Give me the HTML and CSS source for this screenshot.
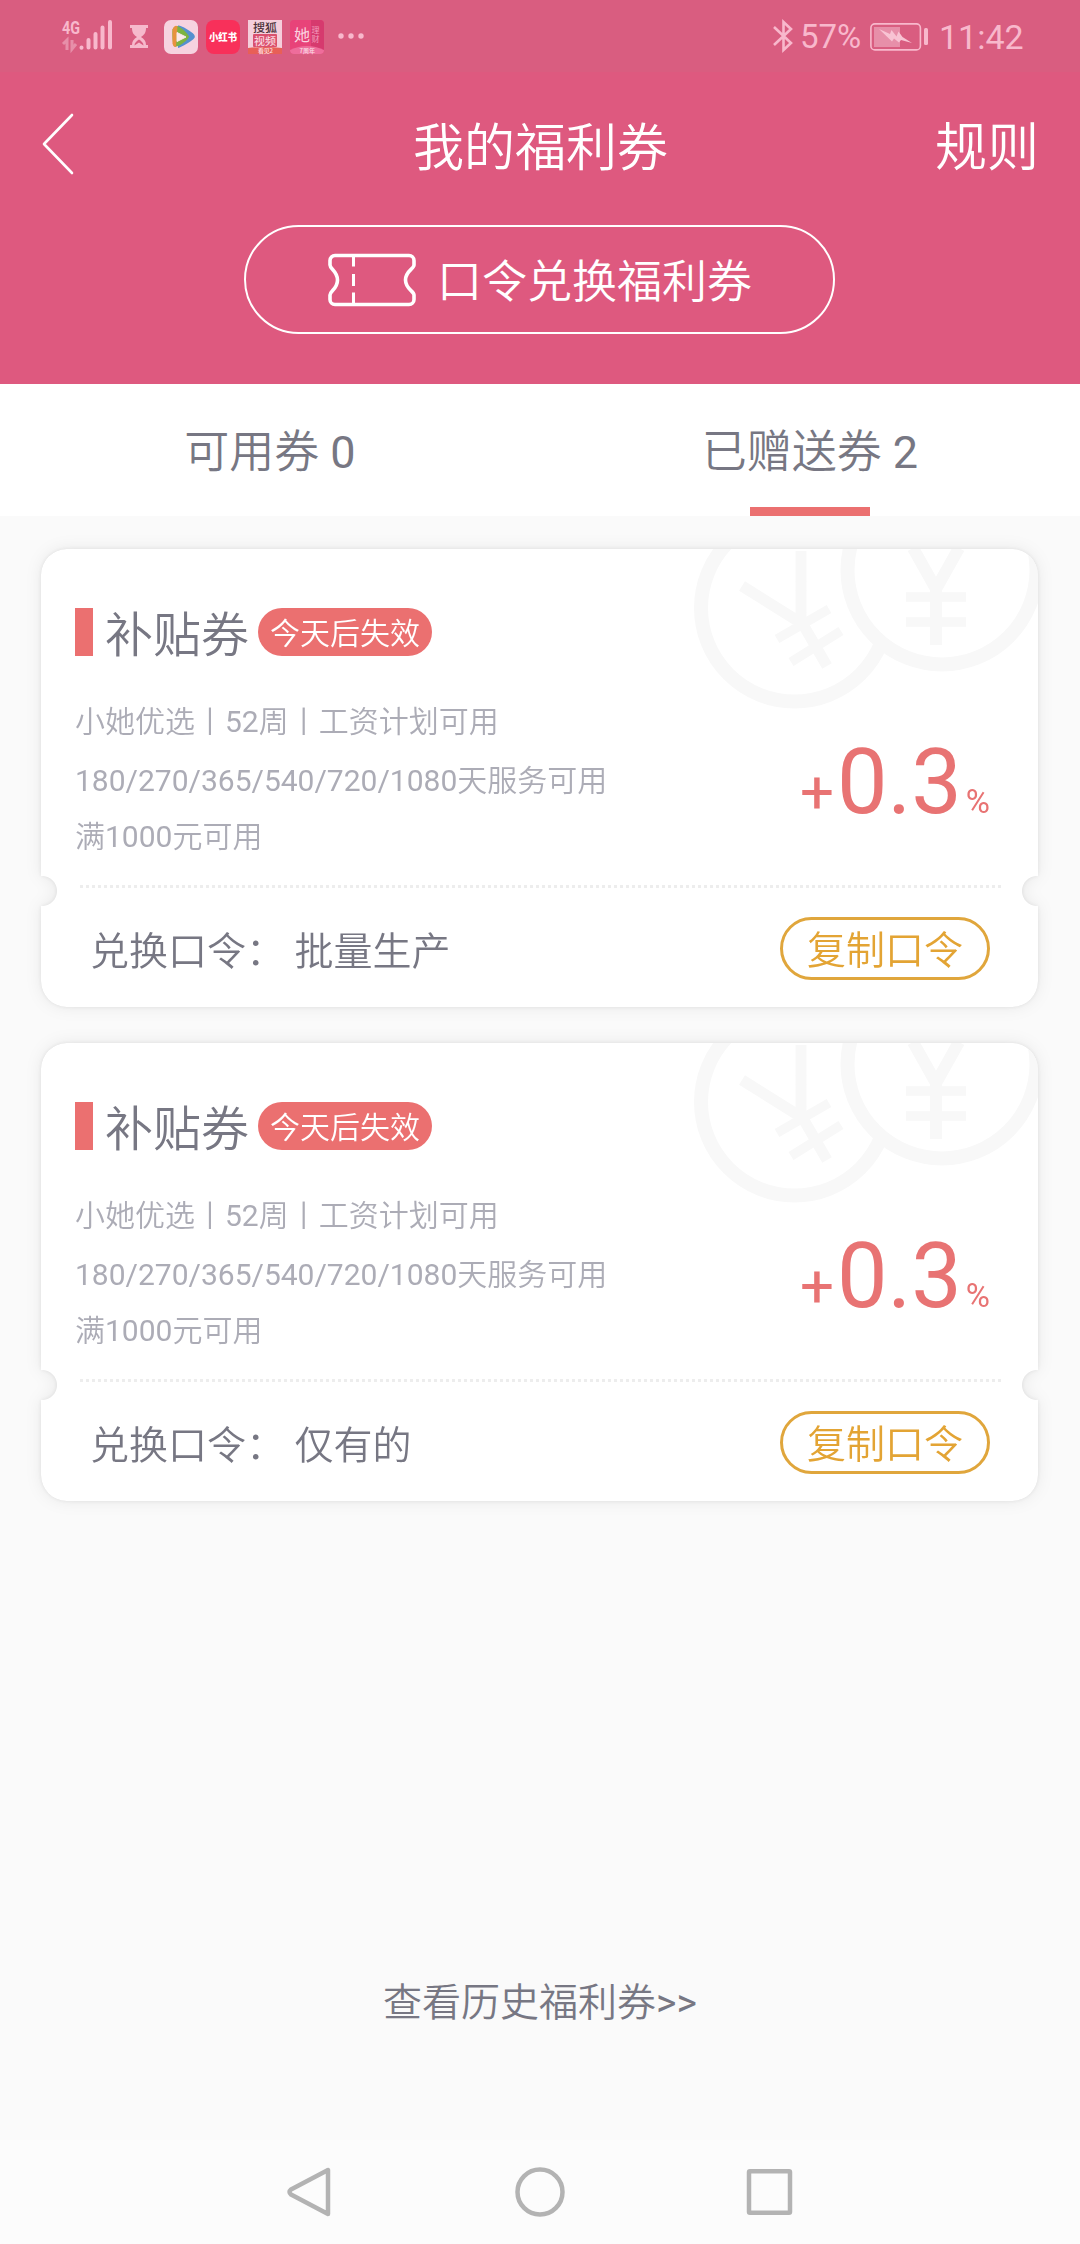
FILE: index.html
```html
<!DOCTYPE html>
<html lang="zh-CN">
<head>
<meta charset="utf-8">
<title>我的福利券</title>
<link rel="stylesheet" href="styles.css">
</head>
<body>
<div class="screen">
  <header class="header">
    <div class="status">
      <svg class="signal" width="52" height="36" viewBox="0 0 52 36">
        <text class="net" x="0" y="16" textLength="18" lengthAdjust="spacingAndGlyphs">4G</text>
        <path class="arrows" d="M1 26l4-4v10M10 22v9l4-5"/>
        <path class="bars" d="M19.500 29.500v.2M26.500 22v7.500M33.500 16v13.500M40.500 9.500v20M48 4v25.500"/>
      </svg>
      <svg class="hourglass" width="18" height="24" viewBox="0 0 18 24">
        <path d="M0 0h18v3h-2c0 5-2 7-5 9 3 2 5 4 5 8h2v3H0v-3h2c0-4 2-6 5-8C4 10 2 8 2 3H0z" fill="#f6b9cc"/>
        <path d="M4.500 20.500c0-3 2-4 4.500-6 2.500 2 4.500 3 4.500 6L9 17.500z" fill="#d95d80"/>
      </svg>
      <svg class="app" width="34" height="34" viewBox="0 0 34 34">
        <rect width="34" height="34" rx="7" fill="#f6d3e0"/>
        <path d="M14 5.500c2-.8 14 6 16 9 1.500 2 1 3.500-1 5-3 2.500-11 7.500-15 8.500z" fill="#5590cf"/>
        <path d="M8.500 9.500C10 6 13 5 15.500 7c4 2.500 8 6 9.500 9.500 0 3-11 11.500-14.500 10-2-1-2.500-13-2-17z" fill="#7cb342"/>
        <path d="M8.500 9.500C10 6 12 5 13.500 6.500L12 27c-2 0-3-1-3.500-3.500z" fill="#e8923e"/>
        <path d="M13 12.500l9 4.500-9 4.500z" fill="#fbe9ea" stroke="#fbe9ea" stroke-width="1" stroke-linejoin="round"/>
      </svg>
      <svg class="app" width="34" height="34" viewBox="0 0 34 34">
        <rect width="34" height="34" rx="8" fill="#f8305a"/>
        <text class="app-book" x="3" y="20.500" textLength="28" lengthAdjust="spacingAndGlyphs">小红书</text>
      </svg>
      <svg class="app" width="34" height="34" viewBox="0 0 34 34">
        <rect width="34" height="34" fill="#f5cfdc"/>
        <text class="app-sohu" x="5" y="11.500" textLength="24" lengthAdjust="spacingAndGlyphs">搜狐</text>
        <rect x="5" y="14" width="24" height="13" rx="1" fill="#d9506e"/>
        <text class="app-video" x="6" y="24.500" textLength="22" lengthAdjust="spacingAndGlyphs">视频</text>
        <path d="M0 28q17-2 34 0v6H0z" fill="#e85f57"/>
        <text class="app-tiny" x="10" y="33" textLength="15">看见2</text>
      </svg>
      <svg class="app" width="34" height="34" viewBox="0 0 34 34">
        <rect width="34" height="34" rx="4" fill="#e84379"/>
        <path d="M21 0h9q4 0 4 4v26H21z" fill="#d63a6e"/>
        <text class="app-she" x="4" y="20.500">她</text>
        <text class="app-side" x="21.500" y="13">理</text>
        <text class="app-side" x="21.500" y="21.500">财</text>
        <path d="M0 30q17-8 34 0 0 4-4 4H4q-4 0-4-4z" fill="#ee6d9b"/>
        <text class="app-tiny" x="9.500" y="32.500">7周年</text>
      </svg>
      <svg class="more" width="26" height="6" viewBox="0 0 26 6" fill="#f8b8cc">
        <circle cx="3" cy="3" r="2.700"/><circle cx="13" cy="3" r="2.700"/><circle cx="23" cy="3" r="2.700"/>
      </svg>
      <svg class="bluetooth" width="20" height="32" viewBox="0 0 20 32" fill="none" stroke="#f8b8cc" stroke-width="2.600">
        <path d="M1 7l17 16-7.500 7V2l7.500 7L1 25"/>
      </svg>
      <span class="percent">57%</span>
      <svg class="battery" width="58" height="28" viewBox="0 0 58 28">
        <rect x=".9" y=".9" width="49.500" height="26" rx="4" fill="none" stroke="#f8b8cc" stroke-width="1.600"/>
        <rect x="4" y="4" width="26" height="20" fill="#e78fa9"/>
        <path d="M9 6l11 5 1.500-4 5 6.500 2-5 4 5.500L42 20l-11-3-2 2.500-5-4-2 3z" fill="#f8c3d3"/>
        <rect x="54" y="5" width="4" height="17" rx="1.500" fill="#f8b8cc"/>
      </svg>
      <span class="clock">11:42</span>
    </div>
    <div class="titlebar">
      <svg class="back" width="32" height="62" viewBox="0 0 32 62" fill="none" stroke="#fff" stroke-width="2.600" stroke-linecap="round" stroke-linejoin="round">
        <path d="M30 2L2 31l28 29"/>
      </svg>
      <h1 class="title">我的福利券</h1>
      <span class="rules">规则</span>
    </div>
    <div class="redeem">
      <svg width="88" height="54" viewBox="0 0 88 54" fill="none" stroke="#fff" stroke-width="3.600">
        <path d="M7 2.500H81a5 5 0 0 1 5 5V12c0 4-8.500 6-8.500 15S86 38 86 42v4.500a5 5 0 0 1-5 5H7a5 5 0 0 1-5-5V42c0-4 7.500-6 7.500-15S2 16 2 12V7.500a5 5 0 0 1 5-5z"/>
        <path d="M25.500 4v9.500M25.500 21v12M25.500 39.500V50" stroke-width="3"/>
      </svg>
      <span>口令兑换福利券</span>
    </div>
  </header>

  <nav class="tabs">
    <div class="tab">可用券 <span class="num">0</span></div>
    <div class="tab active">已赠送券 <span class="num">2</span></div>
  </nav>

  <main class="list">
    <section class="card">
      <div class="sheet">
        <svg class="coins" width="350" height="165" viewBox="0 0 350 165" fill="none" stroke="#f8f8f8" stroke-width="14">
          <circle cx="103.500" cy="59" r="93.500"/>
          <g stroke-width="11"><path d="M110 2V74L51 37M110 72l26 45"/><path d="M86 90l52-30M100 113l50-31" stroke-width="9.500"/></g>
          <circle cx="251" cy="21" r="94.500" fill="#fff"/>
          <g stroke-width="12"><path d="M245 96V38M222-1l23 41L268-1"/><path d="M215 48h60M215 73h60" stroke-width="9.500"/></g>
        </svg>
        <div class="head"><i class="mark"></i><h2 class="name">补贴券</h2><span class="badge">今天后失效</span></div>
        <div class="body">
          <div class="terms">
            <p>小她优选丨<span class="num">52</span>周丨工资计划可用</p>
            <p><span class="num">180/270/365/540/720/1080</span>天服务可用</p>
            <p>满<span class="num">1000</span>元可用</p>
          </div>
          <div class="rate"><span class="plus">+</span><span class="value">0.3</span><span class="unit">%</span></div>
        </div>
        <div class="rule"></div>
        <div class="foot"><span class="code">兑换口令： 批量生产</span><span class="copy">复制口令</span></div>
      </div>
    </section>

    <section class="card">
      <div class="sheet">
        <svg class="coins" width="350" height="165" viewBox="0 0 350 165" fill="none" stroke="#f8f8f8" stroke-width="14">
          <circle cx="103.500" cy="59" r="93.500"/>
          <g stroke-width="11"><path d="M110 2V74L51 37M110 72l26 45"/><path d="M86 90l52-30M100 113l50-31" stroke-width="9.500"/></g>
          <circle cx="251" cy="21" r="94.500" fill="#fff"/>
          <g stroke-width="12"><path d="M245 96V38M222-1l23 41L268-1"/><path d="M215 48h60M215 73h60" stroke-width="9.500"/></g>
        </svg>
        <div class="head"><i class="mark"></i><h2 class="name">补贴券</h2><span class="badge">今天后失效</span></div>
        <div class="body">
          <div class="terms">
            <p>小她优选丨<span class="num">52</span>周丨工资计划可用</p>
            <p><span class="num">180/270/365/540/720/1080</span>天服务可用</p>
            <p>满<span class="num">1000</span>元可用</p>
          </div>
          <div class="rate"><span class="plus">+</span><span class="value">0.3</span><span class="unit">%</span></div>
        </div>
        <div class="rule"></div>
        <div class="foot"><span class="code">兑换口令： 仅有的</span><span class="copy">复制口令</span></div>
      </div>
    </section>
  </main>

  <div class="history">查看历史福利券<span class="num">&gt;&gt;</span></div>

  <footer class="sysnav">
    <svg width="506" height="50" viewBox="0 0 506 50" fill="none" stroke="#b3b3b3" stroke-width="4.500" stroke-linejoin="round">
      <path d="M41 3v44L4 27.500q-3-2.500 0-5z"/>
      <circle cx="253" cy="25" r="22.500"/>
      <rect x="462" y="4.300" width="41" height="41.500" rx="1"/>
    </svg>
  </footer>
</div>
</body>
</html>
```
FILE: styles.css
```css
* { box-sizing: border-box; margin: 0; padding: 0; }
body {
  background: #fafafa;
  color: #777783;
  font-family: Roboto, "Noto Sans CJK SC", sans-serif;
  font-weight: 350;
}
.num { font-weight: 400; }
.screen { width: 1080px; height: 2244px; display: flex; flex-direction: column; overflow: hidden; }

.header { height: 384px; background: #de597f; color: #fff; display: flex; flex-direction: column; align-items: center; }
.status { width: 1080px; height: 72px; padding-left: 62px; background: #d95d80; color: #f8b8cc; display: flex; align-items: center; font-weight: 400; font-size: 34px; }
.status svg { flex: none; overflow: visible; }
.hourglass { margin: 2px 16px 0 16px; }
.app { margin: 2px 8px 0 0; }
.more { margin: 0 409px 0 6px; }
.percent { width: 70px; margin-left: 7px; font-size: 33px; line-height: 40px; padding-top: 2px; }
.battery { margin-top: 1px; }
.clock { margin-left: 11px; line-height: 40px; padding-top: 2px; }
.net { font: 700 19px Roboto, sans-serif; fill: #f8b8cc; }
.arrows { fill: none; stroke: #e78fa9; stroke-width: 3; }
.bars { fill: none; stroke: #f8b8cc; stroke-width: 4; stroke-linecap: round; }
.app text { font-family: "Noto Sans CJK SC", sans-serif; }
.app-book { font-size: 10px; font-weight: 900; fill: #fff; }
.app-sohu { font-size: 11px; font-weight: 500; fill: #4a3139; }
.app-video { font-size: 10px; font-weight: 500; fill: #f9d5df; }
.app-tiny { font-size: 6px; font-weight: 500; fill: #fbe0e8; }
.app-she { font-size: 16px; font-weight: 400; fill: #fbd3e0; }
.app-side { font-size: 8px; font-weight: 400; fill: #f39abb; }

.titlebar { width: 100%; height: 152px; padding: 0 41px 0 42px; display: grid; grid-template-columns: 1fr auto 1fr; align-items: center; line-height: 76px; }
.titlebar .back { margin-bottom: 8px; }
.title { font-size: 51px; font-weight: 350; padding-top: 2px; }
.rules { justify-self: end; font-size: 52px; padding-top: 2px; }
.redeem { width: 591px; height: 109px; margin: 1px 1px 0 0; border: 2px solid #fff; border-radius: 55px; display: flex; align-items: center; padding-left: 82px; gap: 21px; font-size: 45px; line-height: 66px; }
.redeem span { padding-top: 6px; }

.tabs { height: 132px; background: #fff; display: flex; font-size: 45px; }
.tab { flex: 1; height: 132px; padding-top: 3px; text-align: center; line-height: 132px; position: relative; }
.active::after { content: ""; position: absolute; left: 210px; bottom: 0; width: 120px; height: 9px; background: #eb7070; }

.list { padding: 33px 42px 0 41px; display: flex; flex-direction: column; gap: 36px; }
.card { filter: drop-shadow(0 0 2px rgba(0,0,0,.08)) drop-shadow(0 0 8px rgba(0,0,0,.07)); }
.sheet {
  position: relative; height: 458px; background: #fff; border-radius: 26px; padding: 59px 48px 0 34px; overflow: hidden;
  mask: radial-gradient(circle at 1px 342px, transparent 14.5px, #000 15.5px), radial-gradient(circle at 996px 342px, transparent 14.5px, #000 15.5px);
  mask-composite: intersect;
}
.coins { position: absolute; right: -3px; top: 0; }
.head { height: 48px; display: flex; align-items: center; }
.mark { width: 18px; height: 48px; background: #eb7070; }
.name { margin: 8px 9px 0 12px; font-size: 48px; line-height: 48px; font-weight: 350; }
.badge { width: 174px; height: 48px; border-radius: 24px; background: #eb7070; color: #fff; font-size: 30px; line-height: 51px; text-align: center; }
.body { height: 229px; padding-top: 37px; display: flex; justify-content: space-between; }
.terms { font-size: 30px; color: #acacb6; }
.terms p { height: 59px; line-height: 58px; white-space: nowrap; }
.terms p:last-child { margin-top: -3px; }
.rate { display: flex; align-items: baseline; color: #e87373; font-weight: 400; height: 106px; margin-top: 37px; line-height: 106px; }
.plus { font-size: 60px; margin-right: 3px; }
.value { font-size: 90px; }
.unit { font-size: 33px; margin-left: 4px; }
.rule { height: 3px; width: 921px; margin-left: 5px; background: repeating-linear-gradient(90deg, #ededed 0 3px, transparent 3px 6px); }
.foot { display: flex; justify-content: space-between; align-items: center; height: 63px; margin: 29px 0 0 15px; font-size: 39px; white-space: pre; }
.code { margin-top: -2px; }
.copy { width: 210px; height: 63px; border: 3px solid #e0a63c; border-radius: 32px; color: #e3a434; line-height: 63px; text-align: center; }

.history { margin-top: auto; height: 58px; margin-bottom: 108px; line-height: 58px; text-align: center; font-size: 39px; }
.sysnav { height: 104px; background: #fcfcfc; display: flex; justify-content: center; align-items: center; }
```
